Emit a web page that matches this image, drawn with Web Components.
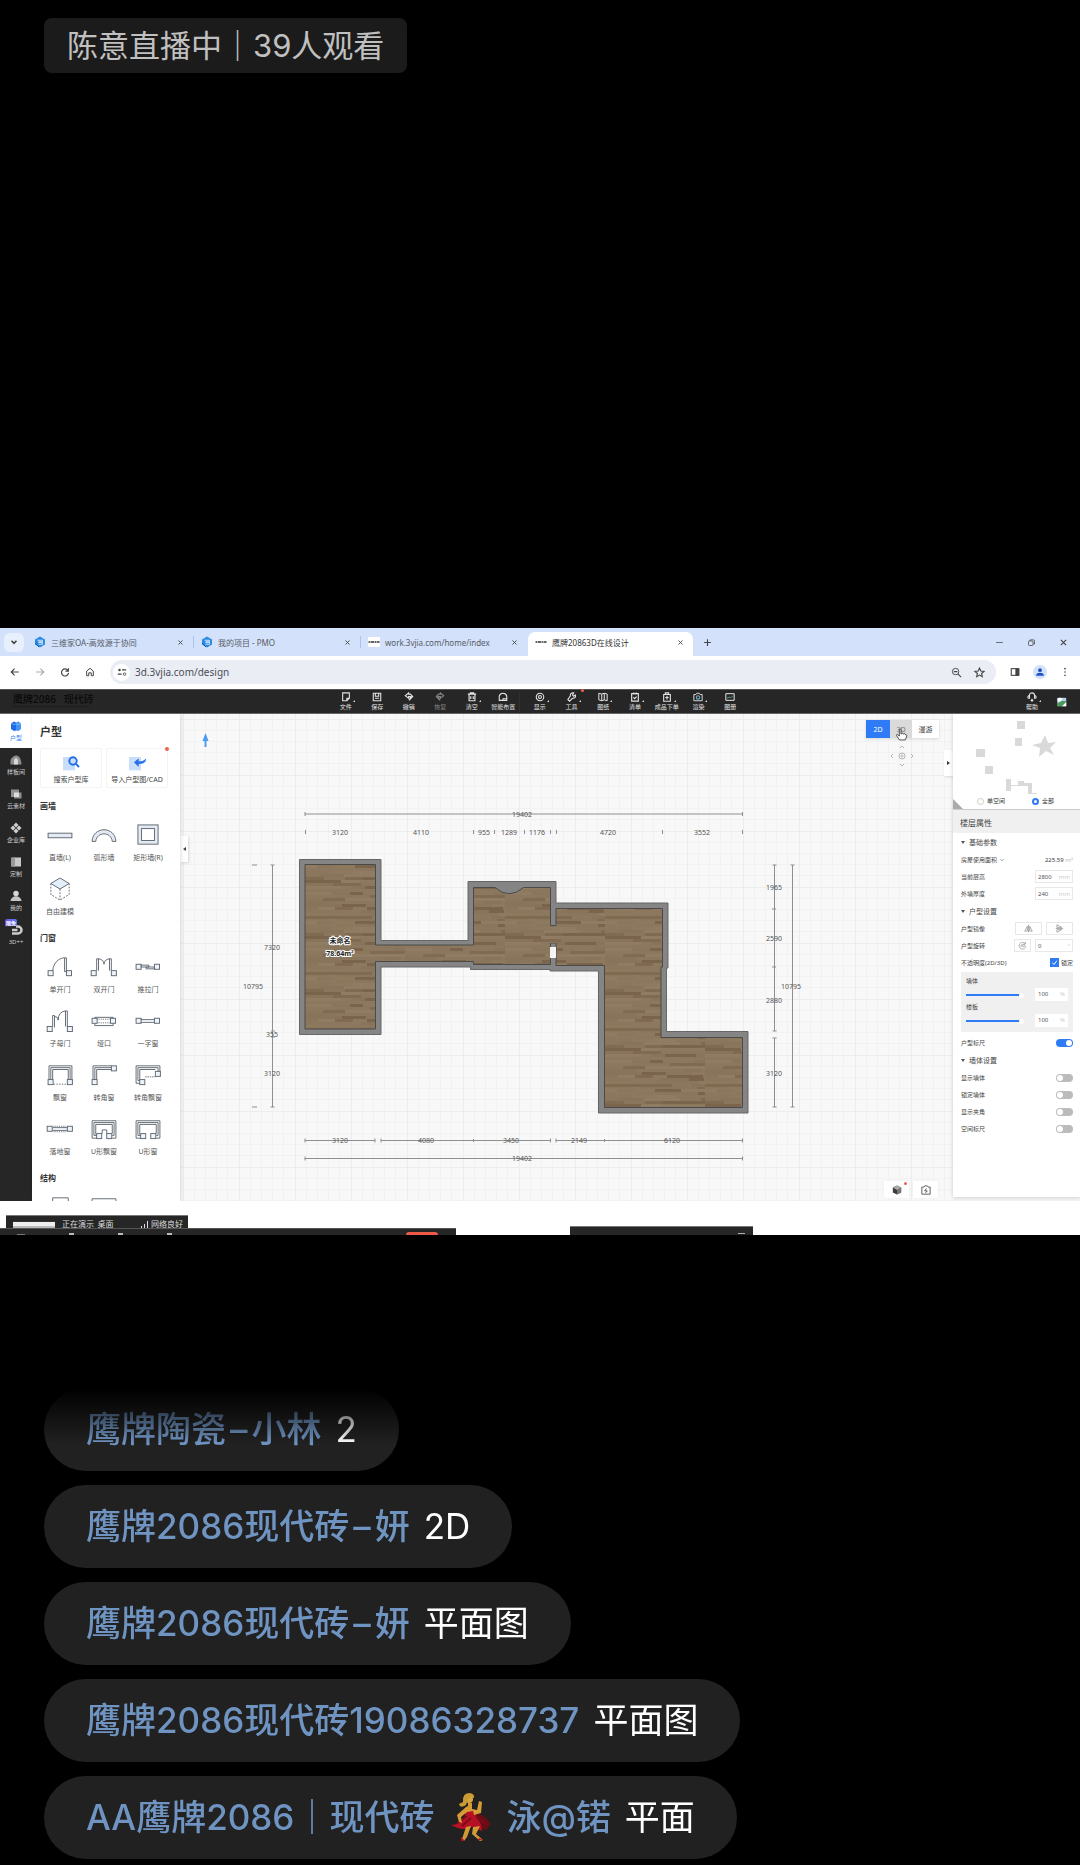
<!DOCTYPE html>
<html lang="zh-CN">
<head>
<meta charset="utf-8">
<meta name="viewport" content="width=device-width, initial-scale=1">
<title>直播间</title>
<style>
html{background:#000}
body{margin:0;background:#000;color:#333;font-family:"Noto Sans","Noto Sans CJK SC",sans-serif}
</style>
</head>
<body>
<live-room></live-room>
<script>
const element = (tag, html, setup) => customElements.define(tag, class extends HTMLElement {
  connectedCallback() {
    if (this.shadowRoot) return;
    const root = this.attachShadow({mode: 'open'});
    const t = document.createElement('template');
    t.innerHTML = '<style>*{box-sizing:border-box}button{font:inherit;color:inherit;border:0;background:none;padding:0;margin:0}</style>' +
      (typeof html === 'function' ? html(this) : html);
    root.append(t.content.cloneNode(true));
    if (setup) setup(this, root);
  }
});

/* ---------- icons (24 x 24 unless listed in BOX) ---------- */
const BOX = {wall:'0 0 28 24', dancer:'0 0 42 48'};
const sq = (x, y) => `<rect x="${x}" y="${y}" width="5.5" height="5.5" fill="#eef4fb"/>`;
const ICONS = {
  down:'<path d="M6 9l6 6 6-6" stroke-width="4"/>',
  close:'<path d="M5 5l14 14M19 5L5 19" stroke-width="3"/>',
  plus:'<path d="M12 3v18M3 12h18" stroke-width="3"/>',
  min:'<path d="M3 12h18"/>',
  restore:'<rect x="4" y="8" width="12" height="12" rx="2"/><path d="M8 8V5h10q2 0 2 2v9h-4"/>',
  back:'<path d="M21 12H4M11 4l-8 8 8 8" stroke-width="2.8"/>',
  forward:'<path d="M3 12h17M13 4l8 8-8 8" stroke-width="2.6"/>',
  reload:'<path d="M19.5 9A8.5 8.5 0 1 0 20.500 14M20 3v7h-7" stroke-width="2.8"/>',
  home:'<path d="M4 21V10l8-7 8 7v11h-5v-7H9v7z" stroke-width="2.4"/>',
  tune:'<path d="M12 7h10M2 17h9" stroke-width="3"/><circle cx="6" cy="7" r="3" fill="currentColor" stroke="none"/><circle cx="18" cy="17" r="3"/>',
  lens:'<circle cx="10" cy="10" r="7"/><path d="M15 15l7 7M6 10h8" stroke-width="2.4"/>',
  star:'<path d="M12 2.500l2.900 6.400 7 .7-5.300 4.600 1.600 6.900L12 17.500l-6.200 3.600 1.600-6.900L2.100 9.600l7-.7z" stroke-width="2.4"/>',
  side:'<rect x="3" y="4" width="18" height="16" stroke-width="2.6"/><path d="M14 4h7v16h-7z" fill="currentColor"/>',
  user:'<circle cx="12" cy="7.500" r="4.500" fill="#1a53c4" stroke="none"/><path d="M3 21v-2c0-7 18-7 18 0v2z" fill="#1a53c4" stroke="none"/>',
  dots:'<g fill="currentColor" stroke="none"><circle cx="12" cy="4" r="2"/><circle cx="12" cy="12" r="2"/><circle cx="12" cy="20" r="2"/></g>',
  fav:'<path d="M12 1l10 6v10l-10 6-10-6V7z" fill="#2c8ae0" stroke="none"/><path d="M7 8.500h10v3H9.500v1.500H17v3.500H9" stroke="#d8ebff" stroke-width="1.800"/><path d="M2 14l8 8" stroke="#0a5eb5"/>',
  mark:'<rect x="0" y="2" width="24" height="20" fill="#fff" stroke="none"/><path d="M1 12h22" stroke="#666" stroke-width="4" stroke-dasharray="4 1 6 1"/>',
  file:'<path d="M4 2h16v13l-6 6H4zM20 15h-6v6" stroke-width="2.6"/>',
  save:'<path d="M3 3h18v18H3zM8 3v7h8V3M7 15h10" stroke-width="2.6"/>',
  undo:'<path d="M11 2L3 9l8 6V11h6l-5 9 9-9-6-6h-4z" stroke-width="2.600"/>',
  redo:'<path d="M13 2l8 7-8 6V11H7l5 9-9-9 6-6h4z" stroke-width="2.600"/>',
  trash:'<path d="M2 5h20M8 5V2h8v3M5 6v15h14V6M9 10v7M15 10v7" stroke-width="2.800"/>',
  house:'<path d="M3 20V10q2-7 9-7t9 7v10zM12 20v-4h9" stroke-width="2.600"/>',
  eye:'<circle cx="12" cy="12" r="9" stroke-width="2.600"/><circle cx="12" cy="12" r="3.500" stroke-width="2.600"/>',
  tool:'<path d="M20 7l-4 3-3-3 3-5c-6-1-9 3-8 8l-6 8 4 4 7-7c6 1 9-4 7-8z" stroke-width="2.600"/>',
  map:'<path d="M2 3l7 2 6-2 7 2v16l-7-2-6 2-7-2zM9 5v16M15 3v16" stroke-width="2.400"/>',
  list:'<path d="M4 4h16v18H4zM9 1v5M15 1v5M8 13l3 3 5-5" stroke-width="2.800"/>',
  bag:'<path d="M4 6h16v16H4zM8 6V2h8v4M12 9v9M8 13h8" stroke-width="2.600"/>',
  camera:'<path d="M2 6h5l2-3h6l2 3h5v15H2z" stroke-width="2.200"/><circle cx="12" cy="13" r="4" stroke="#5db6cc" stroke-width="2.600"/><path d="M9 11l2-2" stroke="#e6503c" stroke-width="3"/>',
  album:'<path d="M2 4h20v16H2z" stroke-width="2.400"/><path d="M5 15l5-3 4 2 5-5" stroke="#63b58e" stroke-width="2"/>',
  headset:'<path d="M6 8c0-8 12-8 12 0M6 8v7H3q-3-4 3-7zM18 8v7h3q3-4-3-7zM12 22v-6M9 19l3 3 3-3" stroke-width="2.600"/>',
  photo:'<rect x="1" y="2" width="21" height="20" fill="#b8d4ef" stroke="none"/><path d="M1 16q8-9 21-6v12H1z" fill="#4b9955" stroke="none"/><path d="M1 4q7-4 12 0l-5 7H1z" fill="#fff" stroke="none"/><path d="M12 22L22 12v10z" fill="#fff" stroke="none"/>',
  plan:'<path d="M2 7l6-4 4 2v16l-4 1-6-4z" fill="#1d6be8" stroke="none"/><path d="M12 5l5-2 5 4v11l-5 4-5-1z" fill="#4593f7" stroke="none"/><path d="M2 7l6 2 4-1 5 1 5-2" stroke="#b9d8ff" stroke-width="1"/>',
  arch:'<path d="M1 21v-9q5-10 13-9 8 3 9 18z" fill="#8e8e8e" stroke="none"/><path d="M8 21V11q4-6 8 0v10z" fill="#d8d8d8" stroke="none"/>',
  sofa:'<path d="M2 3h16v6h5v12H8v-3H2z" fill="#909090" stroke="none"/><path d="M8 9h10v9H8z" fill="#ddd" stroke="none"/>',
  lib:'<path d="M12 1l5 5-5 5-5-5zM18 7l5 5-5 5-5-5zM12 13l5 5-5 5-5-5zM6 7l5 5-5 5-5-5z" fill="#cfcfcf" stroke="none"/>',
  closet:'<path d="M2 3l8-1v20l-8-1z" fill="#999" stroke="none"/><path d="M10 3h12v18H10z" fill="#c8c8c8" stroke="none"/>',
  me:'<circle cx="12" cy="7" r="5.500" fill="#d6d6d6" stroke="none"/><path d="M1 22c1-13 21-13 22 0z" fill="#c4c4c4" stroke="none"/>',
  ring:'<path d="M4 12h11M12 5h4a7 7 0 0 1 0 14H4" stroke="#ccc" stroke-width="5"/>',
  search:'<path d="M0 3h18v20H0z" fill="#c9def8" stroke="none"/><circle cx="15" cy="9" r="5.500" stroke="#2470e8" stroke-width="3"/><path d="M19 13l5 5" stroke="#2470e8" stroke-width="3"/>',
  import:'<path d="M0 3h18v20H0z" fill="#c9def8" stroke="none"/><path d="M25 6c0 6-5 7-11 7v4l-6-6 6-5v4c5 0 8 0 11-4z" fill="#2470e8" stroke="#2470e8" stroke-width="1"/>',
  rotate:'<path d="M19 7A9 9 0 1 0 21 13M20 2v6h-6" stroke-width="1.600"/><path d="M6 15l4-6v7M13 9h4v6h-4z" stroke-width="1.400"/>',
  fliph:'<path d="M12 2v20M9 6v13H2zM15 6v13h7z" stroke-width="1.800"/>',
  flipv:'<path d="M2 12h20M5 9h13L5 2zM5 15h13L5 22z" stroke-width="1.800"/>',
  cube:'<path d="M12 1l10 5v12l-10 5-10-5V6z" fill="#3c3c3c" stroke="none"/><path d="M12 12l10-6v12l-10 5z" fill="#777" stroke="none"/><path d="M2 6l10-5 10 5-10 6z" fill="#aaa" stroke="none"/>',
  shot:'<path d="M2 5h5l2-3h6l2 3h5v17H2zM13 8l-4 6h6l-4 5" stroke-width="2.200"/>',
  hand:'<path d="M8 22l-5-8c-1-2 1-3 3-1l2 2V3c0-2 3-2 3 0v8h1c0-2 3-2 3 0h1c0-1 3-1 3 1 3 0 3 2 2 5l-2 5z" fill="#fff" stroke="#222" stroke-width="1.400"/>',
  /* wall and opening symbols */
  w1:'<rect x="1" y="10" width="26" height="5" fill="#e3eaf4"/>',
  w2:'<path d="M1 19C2 2 26 2 27 19h-4C22 8 6 8 5 19z" fill="#e3eaf4"/>',
  w3:'<rect x="3" y="1" width="22" height="21" fill="#e3eaf4"/><rect x="7" y="5" width="14" height="13" fill="#fff"/>',
  w4:'<path d="M14 0l10 6-10 6L4 6z" fill="#e3f0fb"/><path d="M4 6v12l10 6 10-6V6M14 12v12" stroke-dasharray="2 1.500"/>',
  d1:sq(1,16)+sq(21,16)+'<path d="M6 16C7 7 13 2 19 2v15h2V2h-2"/>',
  d2:sq(0,16)+sq(22,16)+'<path d="M6 16V3h2v13M20 16V3h2v13M8 3q6 1 6 6 0-5 6-6"/>',
  d3:sq(1,9)+sq(21,9)+'<path d="M6 10h9v2H6M12 12h9v2h-9z"/>',
  d4:sq(0,18)+sq(22,18)+'<path d="M6 18V6h2v13M20 18V1h2v17M8 7q4 0 4 4 0-9 8-10"/>',
  d5:sq(1,9)+sq(21,9)+'<path d="M4 9V8h20v1M4 15v2h20v-2"/><path d="M7 10h14M7 14h14" stroke-dasharray="1 1"/>',
  d6:sq(1,9)+sq(21,9)+'<path d="M6 10.500h15M6 13.500h15"/>',
  d7:sq(1,17)+sq(22,17)+'<path d="M2 17V2h25v15M4 17V4h21v13M6 17V6h17v11"/><path d="M7 22h15" stroke-dasharray="1.500 1.500"/>',
  d8:sq(1,17)+sq(22,2)+'<path d="M2 17V2h20M4 17V4h18M6 17V6h16"/>',
  d9:sq(5,17)+sq(22,8)+'<path d="M5 21H1V2h26v6M5 18H3V4h22v4M5 17V6h17"/><path d="M11 14h11" stroke-dasharray="1.500 1"/>',
  d10:sq(0,9)+sq(22,9)+'<path d="M6 10.500h16M6 13.500h16"/><path d="M7 9h14M7 15h14" stroke-dasharray="1 1"/>',
  d11:sq(6,17)+sq(17,17)+'<path d="M6 22H1V3h26v19h-4M6 19H3V5h22v14h-2M5 18V7h18v10M12 17v-4h5v4"/>',
  d12:sq(6,17)+sq(17,17)+'<path d="M6 22H1V3h26v19h-4M6 19H3V5h22v14h-2M5 18V7h18v10"/>',
  s1:'<path d="M6 24V2h17v22"/>', s2:'<path d="M1 24V3h26v21"/>',
  dancer:'<path d="M22 20q11-1 19 11l-5 6q-7-2-13-6z" fill="#680d15"/><path d="M15 17q6-3 9 0l3 9q5 4 5 12l-10-4q-9 5-21-2 9 0 14-8z" fill="#b41224"/><path d="M7 30l10-7M12 33l9-8M26 23l10 8" stroke="#7e0b18" fill="none"/><path d="M18 10h4v6l5 1 2-9 3 1-1 11-7 2-1-4-6 1-6 5 1 6-3-1-2-7 9-8 2-1z" fill="#d79b35"/><path d="M24 34l6-1-4 8 7 6-3 1-8-7 1-7zM16 34l5-1-4 11-3 4-2-2z" fill="#d29a37"/><circle cx="19" cy="6" r="4" fill="#d8a545"/><path d="M16 12q-6 4-7-1l4-2q-1-9 7-9 5 1 4 5-5-2-6 1z" fill="#c99b32"/><path d="M11 44l4 4h-4zM29 45l4 2h-5z" fill="#b41224"/>'
};
element('ui-icon', el => {
  const n = el.getAttribute('name');
  const box = BOX[n] || (/^[wds]\d+$/.test(n) ? BOX.wall : '0 0 24 24');
  const flat = n === 'dancer';
  return `<style>:host{display:inline-block;width:10px;height:10px;flex:none}svg{display:block;width:100%;height:100%;overflow:visible}</style>
  <svg viewBox="${box}" aria-hidden="true" fill="none" stroke="${flat ? 'none' : 'currentColor'}" stroke-width="${box === BOX.wall ? 1 : 2}">${ICONS[n]}</svg>`;
});

/* ---------- live room ---------- */
element('live-badge', `<style>
:host{display:inline-block;background:#1b1b1b;color:#c0c0c0;border-radius:8px;padding:0 23px;font:400 31px/55px Inter,"Noto Sans CJK SC",sans-serif;white-space:nowrap}
</style><slot></slot>`);

element('chat-bubble', `<style>
:host{display:flex;gap:14px;align-items:center;height:83px;padding:0 42px 2px;border-radius:42px;background:#212121;color:#fff;font:400 35px/48px Inter,"Noto Sans CJK SC",sans-serif;white-space:nowrap}
.name{color:#6f94c2;font-weight:500}
</style><span class="name"><slot name="name"></slot></span><span><slot></slot></span>`);

element('live-room', `<style>
:host{display:block;background:#000;overflow:hidden}
header{padding:18px 44px 0;height:628px}
main{display:block}
section{display:flex;flex-direction:column;align-items:flex-start;gap:14px;margin-top:153px;padding:0 44px 6px;-webkit-mask-image:linear-gradient(transparent,#000 56px);mask-image:linear-gradient(transparent,#000 56px)}
.name{display:flex;align-items:center}
.dash{padding:0 4px}
.dance{width:42px;height:48px;margin:0 14px 0 16px}
</style>
<header><live-badge>陈意直播中｜39人观看</live-badge></header>
<main><shared-screen></shared-screen></main>
<section aria-label="评论">
<chat-bubble><span slot="name">鹰牌陶瓷<span class="dash">–</span>小林</span>2</chat-bubble>
<chat-bubble><span slot="name">鹰牌2086现代砖<span class="dash">–</span>妍</span>2D</chat-bubble>
<chat-bubble><span slot="name">鹰牌2086现代砖<span class="dash">–</span>妍</span>平面图</chat-bubble>
<chat-bubble><span slot="name">鹰牌2086现代砖19086328737</span>平面图</chat-bubble>
<chat-bubble><span slot="name" class="name">AA鹰牌2086｜现代砖<ui-icon class="dance" name="dancer"></ui-icon>泳@锘</span>平面</chat-bubble>
</section>`);

element('shared-screen', `<style>:host{display:block;background:#fff}</style>
<tab-strip></tab-strip><address-bar></address-bar><app-bar></app-bar><design-workspace></design-workspace><screen-foot></screen-foot>`);

/* ---------- browser ---------- */
element('browser-tab', el => `<style>
:host{display:flex;align-items:center;gap:5px;width:167px;height:12px;padding:0 9px 0 7px;font-size:8px;color:#555b66;border-right:1px solid #a9c4f0;white-space:nowrap}
:host([active]){width:165px;height:24px;margin-top:4px;padding-bottom:4px;background:#fff;border-radius:7px 7px 0 0;border:0;color:#333}
:host([plain]){border-color:transparent}
ui-icon{width:12px;height:12px}
span{flex:1}
button{display:flex}button ui-icon{width:7px;height:7px;color:#444}
</style><ui-icon name="${el.getAttribute('icon')}"></ui-icon><span><slot></slot></span><button aria-label="关闭"><ui-icon name="close"></ui-icon></button>`);

element('tab-strip', `<style>
:host{display:flex;align-items:center;height:28px;background:#d3e1fa;color:#444}
.menu{display:flex;align-items:center;justify-content:center;width:20px;height:19px;margin:0 3px 0 4px;border-radius:6px;background:#e8f0fd}
.menu ui-icon{width:10px;height:10px}
.add{margin-left:10px;display:flex}.add ui-icon{width:9px;height:9px}
.win{margin-left:auto;display:flex;gap:23px;padding-right:12px}.win button{display:flex}.win ui-icon{width:9px;height:9px}
</style><button class="menu" aria-label="标签页"><ui-icon name="down"></ui-icon></button>
<browser-tab icon="fav">三维家OA-高效源于协同</browser-tab><browser-tab icon="fav">我的项目 - PMO</browser-tab><browser-tab icon="mark" plain>work.3vjia.com/home/index</browser-tab><browser-tab icon="mark" active>鹰牌20863D在线设计</browser-tab>
<button class="add" aria-label="新标签页"><ui-icon name="plus"></ui-icon></button>
<div class="win"><button aria-label="最小化"><ui-icon name="min"></ui-icon></button><button aria-label="还原"><ui-icon name="restore"></ui-icon></button><button aria-label="关闭窗口"><ui-icon name="close"></ui-icon></button></div>`);

element('address-bar', `<style>
:host{display:flex;align-items:center;height:33px;background:#fff;padding:0 10px 1px;color:#444}
button{display:flex}ui-icon{width:10px;height:10px}
.nav{display:flex;gap:15px;width:100px}
.off{color:#aaa}
label{flex:1;display:flex;align-items:center;height:24px;border-radius:12px;background:#eaedf4;padding:0 11px 0 3px}
.tune{width:17px;height:17px;border-radius:9px;background:#fff;display:flex;align-items:center;justify-content:center;margin-right:5px}
input{flex:1;min-width:0;border:0;background:none;padding:0;font:10px/16px "Noto Sans",sans-serif;color:#4b4f58;outline:0}
.in{display:flex;gap:12px}.in ui-icon{width:11px;height:11px}
.out{display:flex;align-items:center;gap:13px;padding-left:14px}
.who{width:14px;height:14px;border-radius:7px;background:#d3e1fa;align-items:center;justify-content:center}
</style><div class="nav"><button aria-label="后退"><ui-icon name="back"></ui-icon></button><button class="off" aria-label="前进"><ui-icon name="forward"></ui-icon></button><button aria-label="刷新"><ui-icon name="reload"></ui-icon></button><button aria-label="主页"><ui-icon name="home"></ui-icon></button></div>
<label><span class="tune"><ui-icon name="tune"></ui-icon></span><input aria-label="地址" value="3d.3vjia.com/design"><span class="in"><ui-icon name="lens"></ui-icon><ui-icon name="star"></ui-icon></span></label>
<div class="out"><button aria-label="侧栏"><ui-icon name="side"></ui-icon></button><button class="who" aria-label="账号"><ui-icon name="user"></ui-icon></button><button aria-label="更多"><ui-icon name="dots"></ui-icon></button></div>`);

/* ---------- design tool ---------- */
element('menu-item', el => `<style>
:host{display:block}
button{position:relative;display:flex;flex-direction:column;align-items:center;width:100%;font-size:6px;line-height:9px;color:#e4e4e4;white-space:nowrap}
:host([off]) button{color:#858585}
ui-icon{width:10px;height:10px;margin-bottom:1px}
:host([more]) button::after{content:"";position:absolute;left:calc(50% + 7px);top:8px;border:1px solid;border-color:transparent #ddd #ddd transparent}
:host([fresh]) button::before{content:"";position:absolute;left:calc(50% + 9px);top:-3px;width:3px;height:3px;border-radius:2px;background:#f0604d}
</style><button><ui-icon name="${el.getAttribute('icon')}"></ui-icon><slot></slot></button>`);

element('app-bar', `<style>
:host{display:grid;grid-template-columns:1fr auto 1fr;align-items:center;height:25px;background:#262626;border-top:1px solid #555;border-bottom:1px solid #666}
.logo{padding-left:13px;color:#0a0a0a;font:500 10px/10px "Noto Sans","Noto Sans CJK SC",sans-serif}
.logo small{display:block;height:4px;width:76px;margin-top:2px;border-top:1px dotted #161616}
nav{display:flex;gap:4px;padding-right:4px}
.g{display:grid;grid-auto-flow:column;grid-auto-columns:1fr}
.a{width:190px;border-right:1px solid #303030}.b{width:222px}
.right{display:flex;justify-content:flex-end;align-items:center;gap:9px;padding-right:13px}
.right menu-item{width:32px}
.right>ui-icon{width:10px;height:10px}
</style><div class="logo">鹰牌2086&nbsp;&nbsp; 现代砖<small></small></div>
<nav><div class="g a"><menu-item icon="file" more>文件</menu-item><menu-item icon="save">保存</menu-item><menu-item icon="undo">撤销</menu-item><menu-item icon="redo" off>恢复</menu-item><menu-item icon="trash" more>清空</menu-item><menu-item icon="house">智能布置</menu-item></div>
<div class="g b"><menu-item icon="eye" more>显示</menu-item><menu-item icon="tool" more fresh>工具</menu-item><menu-item icon="map" more>图纸</menu-item><menu-item icon="list" more>清单</menu-item><menu-item icon="bag" more>成品下单</menu-item><menu-item icon="camera" more>渲染</menu-item><menu-item icon="album">图册</menu-item></div></nav>
<div class="right"><menu-item icon="headset" more>帮助</menu-item><ui-icon name="photo"></ui-icon></div>`);

element('rail-item', el => `<style>
:host{display:block;height:34px;color:#d0d0d0}
:host([active]){background:#fff;color:#3c84f5}
button{position:relative;display:flex;flex-direction:column;align-items:center;width:100%;padding-top:6px;font-size:6px;line-height:10px}
ui-icon{width:12px;height:12px;margin-bottom:1px}
em{position:absolute;left:5px;top:1px;background:linear-gradient(90deg,#7a4be0,#567cf0);color:#fff;font:700 5px/7px "Noto Sans CJK SC",sans-serif;padding:0 1px;border-radius:2px 2px 2px 0}
</style><button><ui-icon name="${el.getAttribute('icon')}"></ui-icon>${el.hasAttribute('badge') ? `<em>${el.getAttribute('badge')}</em>` : ''}<slot></slot></button>`);

element('part-item', el => `<style>
:host{display:block}
button{display:flex;flex-direction:column;align-items:center;width:100%;font-size:7px;line-height:10px;color:#555;white-space:nowrap}
ui-icon{width:28px;height:22px;margin:1px 0 7px;color:#5b626b}
</style><button><ui-icon name="${el.getAttribute('icon')}"></ui-icon><slot></slot></button>`);

element('part-group', el => `<style>
:host{display:block}
h3{margin:0;font:700 8px/12px "Noto Sans CJK SC",sans-serif;color:#333;padding-left:8px}
div{display:grid;grid-template-columns:repeat(3,1fr);row-gap:14px;padding:11px 10px 15px 6px}
</style><h3>${el.getAttribute('label')}</h3><div><slot></slot></div>`);

element('parts-panel', `<style>
:host{display:block;width:148px;background:#fff;overflow:hidden;box-shadow:1px 0 4px #0002;z-index:1}
h2{margin:0;padding:9px 8px 0;font:700 11px/16px "Noto Sans CJK SC",sans-serif;color:#333}
.cards{display:grid;grid-template-columns:1fr 1fr;gap:4px;padding:9px 12px 12px 8px}
.cards button{position:relative;height:40px;border:1px solid #f3f3f3;border-radius:2px;display:flex;flex-direction:column;align-items:center;gap:4px;padding-top:6px;font-size:7px;line-height:10px;white-space:nowrap;color:#444}
.cards ui-icon{width:16px;height:16px}
.dot{position:absolute;right:-2px;top:-2px;width:4px;height:4px;border-radius:2px;background:#f0604d}
</style><h2>户型</h2><div class="cards"><button><ui-icon name="search"></ui-icon>搜索户型库</button><button><ui-icon name="import"></ui-icon>导入户型图/CAD<i class="dot"></i></button></div>
<part-group label="画墙"><part-item icon="w1">直墙(L)</part-item><part-item icon="w2">弧形墙</part-item><part-item icon="w3">矩形墙(R)</part-item><part-item icon="w4">自由建模</part-item></part-group>
<part-group label="门窗"><part-item icon="d1">单开门</part-item><part-item icon="d2">双开门</part-item><part-item icon="d3">推拉门</part-item><part-item icon="d4">子母门</part-item><part-item icon="d5">垭口</part-item><part-item icon="d6">一字窗</part-item><part-item icon="d7">飘窗</part-item><part-item icon="d8">转角窗</part-item><part-item icon="d9">转角飘窗</part-item><part-item icon="d10">落地窗</part-item><part-item icon="d11">U形飘窗</part-item><part-item icon="d12">U形窗</part-item></part-group>
<part-group label="结构"><part-item icon="s1"></part-item><part-item icon="s2"></part-item></part-group>`);

/* wooden floor: short planks in rows, shades from a small fixed generator */
const planks = (() => {
  let s = 7, out = '';
  const rnd = () => (s = (s * 16807) % 2147483647) / 2147483647;
  const tones = ['#8c785f','#88745b','#907c63','#806b52','#8a765d','#7a654c','#8d795e','#8b775d'];
  for (let y = 0; y < 56; y += 3) for (let x = 0; x < 100;) {
    const w = 12 + Math.round(rnd() * 26);
    out += `<rect x="${x}" y="${y}" width="${w}" height="${rnd() > .5 ? 4 : 3}" fill="${tones[Math.floor(rnd() * 8)]}"/>`;
    x += w;
  }
  return out;
})();
const T = (x, y, t) => `<text x="${x}" y="${y + 3}">${t}</text>`;
const H = (y, a, b) => `M${a} ${y}H${b}M${a} ${y - 2}v4M${b} ${y - 2}v4`;
const V = (x, a, b) => `M${x} ${a}V${b}M${x - 2} ${a}h4M${x - 2} ${b}h4`;
element('plan-canvas', `<style>
:host{display:block;position:relative;flex:1;min-width:0;height:100%}
svg.plan{display:block;width:100%;height:100%}
text{font:7px "Noto Sans",sans-serif;fill:#555;text-anchor:middle}
.room text{font:700 7px "Noto Sans","Noto Sans CJK SC",sans-serif;fill:#222;stroke:#fff;stroke-width:2px;paint-order:stroke}
.fold{position:absolute;left:0;top:122px;width:8px;height:26px;background:#fff;box-shadow:1px 1px 3px #0002;color:#333;display:flex;align-items:center;justify-content:center}
.fold::before{content:"";border:2px solid transparent;border-right:3px solid #444;border-left:0}
.fold.r{left:auto;right:0;top:36px;width:9px}
.fold.r::before{border:2px solid transparent;border-left:3px solid #333;border-right:0}
.modes{position:absolute;right:14px;top:6px;display:flex;height:18px;background:#fff;box-shadow:0 1px 3px #0002;font-size:7px;color:#333}
.modes button{width:24px}.modes .on{background:#2f7bf5;color:#fff}.modes .hov{background:#dadada;color:#777;width:22px}.modes button:last-child{width:27px}
.hand{position:absolute;right:45px;top:14px;width:13px;height:13px}
.tools{position:absolute;right:15px;bottom:3px;display:flex;gap:4px}
.tools button{position:relative;display:flex;align-items:center;justify-content:center;width:25px;height:17px;background:#fff;box-shadow:0 0 2px #0001;color:#555}
.tools ui-icon{width:10px;height:10px}
.tools i{position:absolute;right:2px;top:1px;width:3px;height:3px;border-radius:2px;background:#f0604d}
.pad{position:absolute;right:38px;top:31px;width:26px;height:22px}
</style>
<svg class="plan" viewBox="180 714 773 487" preserveAspectRatio="xMidYMid slice" role="img" aria-label="户型平面图">
<defs><pattern id="grid" x="183" y="719" width="56" height="56" patternUnits="userSpaceOnUse"><path d="M11.500 0v56M22.500 0v56M33.500 0v56M44.500 0v56M0 11.500h56M0 22.500h56M0 33.500h56M0 44.500h56" stroke="#f2f2f2"/><path d="M.5 0v56M0 .5h56" stroke="#ededed"/></pattern>
<pattern id="wood" x="305" y="865" width="100" height="56" patternUnits="userSpaceOnUse"><rect width="100" height="56" fill="#88745b"/>${planks}</pattern></defs>
<rect x="180" y="714" width="773" height="487" fill="#f8f8f8"/><rect x="180" y="714" width="773" height="487" fill="url(#grid)"/>
<path d="M299.500 859.500H381V940.500H468V881.500H556V903H668V968H666.500V1031.500H748V1113H598.500V971H550V969.500H470.500V967H381V1034.500H299.500z" fill="#858585" stroke="#666"/>
<path d="M305 864.500H375.500V945H473.500V887.500H495Q509 900 523.500 887.500H550.500V925.500H556V908.500H662.500V967H661V1037.500H742.500V1107.500H604.500V965.500H556V943H550.500V964.500H473.500V961.500H375.500V1029H305z" fill="url(#wood)" stroke="#4a4a48"/>
<path d="M550 926h6v17h-6z" fill="url(#wood)"/><path d="M550 947h6v11h-6z" fill="#f4f4f4"/>
<path d="${H(814, 305, 742.5)}${V(272.5, 865, 1107)}${V(774.5, 865, 1031)}${V(774.5, 1038, 1107)}${V(792.5, 865, 1107)}${H(1140.5, 305, 375)}${H(1140.5, 381, 550.5)}${H(1140.5, 556, 742.5)}${H(1158.5, 305, 742.5)}M252 865h5M252 1107h5M271 1031h4M271 1037h4M772 909h4M772 967h4M473.500 1139v3M604.500 1139v3M305.500 830v4M473.500 830v4M494.500 830v4M524.500 830v4M550.500 830v4M556.500 830v4M662.500 830v4M742.500 830v4" fill="none" stroke="#8f8f8f"/>
${T(522,814,19402)}${T(340,832,3120)}${T(421,832,4110)}${T(484,832,955)}${T(509,832,1289)}${T(537,832,1176)}${T(608,832,4720)}${T(702,832,3552)}
${T(272,947,7320)}${T(272,1034,355)}${T(272,1073,3120)}${T(253,986,10795)}
${T(774,887,1965)}${T(774,938,2590)}${T(774,1000,2880)}${T(774,1073,3120)}${T(791,986,10795)}
${T(340,1140,3120)}${T(426,1140,4080)}${T(511,1140,3450)}${T(579,1140,2149)}${T(672,1140,6120)}${T(522,1158,19402)}
<g class="room">${T(340,940,'未命名')}${T(340,953,'78.64m²')}</g>
<path d="M205.500 733l3 8h-2v6h-2v-6h-2z" fill="#4b9cf0"/>
</svg>
<button class="fold" aria-label="收起左栏"></button>
<div class="modes"><button class="on">2D</button><button class="hov">3D</button><button>漫游</button></div><ui-icon class="hand" name="hand"></ui-icon>
<svg class="pad" viewBox="0 0 26 22" fill="none" stroke="#b5b5b5" aria-hidden="true"><circle cx="13" cy="11" r="3"/><circle cx="13" cy="11" r="1"/><path d="M11 3l2-2 2 2M11 19l2 2 2-2M4 9l-2 2 2 2M22 9l2 2-2 2"/></svg>
<button class="fold r" aria-label="收起右栏"></button>
<div class="tools"><button aria-label="模型"><ui-icon name="cube"></ui-icon><i></i></button><button aria-label="截图"><ui-icon name="shot"></ui-icon></button></div>`);

/* ---------- inspector ---------- */
element('mini-map', `<style>
:host{display:block;position:relative;height:96px;background:#fff;border-bottom:1px solid #ccc}
svg{display:block;width:100%;height:80px}
.opts{display:flex;justify-content:space-between;padding:1px 26px 0 24px;font-size:6px;line-height:12px;color:#333}
label{display:flex;align-items:center;gap:3px}
input{appearance:none;width:7px;height:7px;margin:0;border:1px solid #ccc;border-radius:50%}
input:checked{border:2px solid #2f7bf5}
.corner{position:absolute;left:0;bottom:0;border:5px solid #aaa;border-top-color:transparent;border-right-color:transparent}
</style><svg viewBox="953 714 127 80" fill="#d9d9d9" aria-hidden="true"><path d="M1017 721h8v8h-8zM1015 738h7v8h-7zM976 749h9v8h-9zM985 766h8v8h-8zM1006 779h5v12h-5zM1011 785h8v1h-8zM1018 781h6v2h8v10h5v5h-9v-12h-10z"/><path d="M1045 735l3 8 8-1-6 6 4 7-8-4-7 6 1-9-8-3 9-2z"/></svg>
<div class="opts"><label><input type="radio" name="scope">单空间</label><label><input type="radio" name="scope" checked>全部</label></div><i class="corner"></i>`);

element('prop-row', el => `<style>
:host{display:flex;align-items:center;gap:2px;height:17px;font-size:6px;color:#444;white-space:nowrap}
.c{margin-left:auto;display:flex;align-items:center;gap:4px}
ui-icon{width:6px;height:6px;color:#999}
</style><span>${el.getAttribute('label')}</span>${el.hasAttribute('menu') ? '<ui-icon name="down"></ui-icon>' : ''}<span class="c"><slot></slot></span>`);

element('section-title', `<style>
:host{display:flex;align-items:center;gap:4px;height:18px;font-size:7px;color:#444}
i{border:2px solid transparent;border-top:3px solid #555;border-bottom:0}
</style><i></i><slot></slot>`);

element('unit-input', el => `<style>
:host{display:block}
label{display:flex;align-items:center;width:38px;height:13px;border:1px solid #e8e8e8;background:#fff;padding:0 2px;color:#ccc;font-size:6px}
:host([small]) label{width:33px;border-color:#fff}
input{width:100%;min-width:0;border:0;padding:0;font:6px/10px "Noto Sans",sans-serif;color:#555;background:none;outline:0}
</style><label><input aria-label="${el.getAttribute('label')}" value="${el.getAttribute('value')}"><span>${el.getAttribute('unit')}</span></label>`);

element('toggle-switch', el => `<style>
:host{display:block}
input{appearance:none;display:block;position:relative;margin:0;width:17px;height:8px;border-radius:4px;background:#bbb}
input::after{content:"";position:absolute;left:1px;top:1px;width:6px;height:6px;border-radius:3px;background:#fff}
input:checked{background:#2f7bf5}input:checked::after{left:10px}
</style><input type="checkbox" role="switch" aria-label="${el.getAttribute('label')}" ${el.hasAttribute('checked') ? 'checked' : ''}>`);

element('opacity-slider', el => `<style>
:host{display:block;height:26px;font-size:6px;line-height:8px;color:#444}
label{display:block}
div{display:flex;align-items:center;justify-content:space-between;height:18px}
input{appearance:none;width:58px;height:7px;margin:2px 0 0;background:linear-gradient(90deg,#2f7bf5 54px,#ddd 54px) center/100% 2px no-repeat}
input::-webkit-slider-thumb{appearance:none;width:5px;height:5px;border-radius:3px;background:#fff}
</style><label for="r">${el.getAttribute('label')}</label><div><input id="r" type="range" value="100"><unit-input small label="${el.getAttribute('label')}" value="100" unit="%"></unit-input></div>`);

element('props-panel', `<style>
:host{display:flex;flex-direction:column;width:127px;height:483px;background:#fff;box-shadow:0 0 4px #0003;z-index:1}
h2{margin:0;height:23px;padding-left:7px;background:#f0f0f0;font:400 8px/25px "Noto Sans CJK SC",sans-serif;color:#444}
.body{padding:0 7px 0 8px}
.btn{display:flex;align-items:center;justify-content:center;width:27px;height:13px;border:1px solid #e8e8e8;color:#888}
.btn.s{width:17px}.btn ui-icon{width:9px;height:9px}
.box{background:#f0f0f0;height:60px;margin:1px 0 2px;padding:5px 5px 0}
.lock{display:flex;align-items:center;gap:2px}
.lock span{position:relative;display:flex}
.lock input{appearance:none;margin:0;width:9px;height:9px;background:#2f7bf5}
.lock svg{position:absolute;left:2px;top:2px;width:5px;height:5px;pointer-events:none}
small{font-size:6px;color:#bbb}
</style><mini-map></mini-map><h2>楼层属性</h2><div class="body">
<section-title>基础参数</section-title>
<prop-row label="房屋使用面积" menu><span>225.59 <small>m²</small></span></prop-row>
<prop-row label="当前层高"><unit-input label="当前层高" value="2800" unit="mm"></unit-input></prop-row>
<prop-row label="外墙厚度"><unit-input label="外墙厚度" value="240" unit="mm"></unit-input></prop-row>
<section-title>户型设置</section-title>
<prop-row label="户型镜像"><button class="btn" aria-label="左右镜像"><ui-icon name="fliph"></ui-icon></button><button class="btn" aria-label="上下镜像"><ui-icon name="flipv"></ui-icon></button></prop-row>
<prop-row label="户型旋转"><button class="btn s" aria-label="旋转"><ui-icon name="rotate"></ui-icon></button><unit-input label="户型旋转" value="0" unit="°"></unit-input></prop-row>
<prop-row label="不透明度(2D/3D)"><label class="lock"><span><input type="checkbox" checked><svg viewBox="0 0 5 5" fill="none" stroke="#fff"><path d="M0 2.500l2 2 3-4"/></svg></span>锁定</label></prop-row>
<div class="box"><opacity-slider label="墙体"></opacity-slider><opacity-slider label="楼板"></opacity-slider></div>
<prop-row label="户型标尺"><toggle-switch label="户型标尺" checked></toggle-switch></prop-row>
<section-title>墙体设置</section-title>
<prop-row label="显示墙体"><toggle-switch label="显示墙体"></toggle-switch></prop-row>
<prop-row label="锁定墙体"><toggle-switch label="锁定墙体"></toggle-switch></prop-row>
<prop-row label="显示夹角"><toggle-switch label="显示夹角"></toggle-switch></prop-row>
<prop-row label="空间标尺"><toggle-switch label="空间标尺"></toggle-switch></prop-row>
</div>`);

element('design-workspace', `<style>
:host{display:flex;height:487px;background:#f3f3f3;overflow:hidden}
.rail{width:32px;background:#262626;flex:none}
parts-panel,props-panel{flex:none}
</style><nav class="rail"><rail-item icon="plan" active>户型</rail-item><rail-item icon="arch">样板间</rail-item><rail-item icon="sofa">云素材</rail-item><rail-item icon="lib">企业库</rail-item><rail-item icon="closet">定制</rail-item><rail-item icon="me">我的</rail-item><rail-item icon="ring" badge="限免">3D++</rail-item></nav>
<parts-panel></parts-panel><plan-canvas></plan-canvas><props-panel></props-panel>`);

/* floating meeting bars, cut off by the lower edge of the shared screen */
element('screen-foot', `<style>
:host{display:grid;grid-template-columns:456px 114px 183px;height:34px;background:#fff;overflow:hidden;align-items:end}
.share{display:flex;align-items:flex-end;width:182px;height:13px;margin-left:6px;padding:0 5px 0 7px;background:#262626;color:#ddd;font-size:8px;line-height:9px;overflow:hidden;white-space:nowrap;border-top:1px solid #777}
.thumb{width:42px;height:7px;background:linear-gradient(#333 1px,#eee 1px 5px,#bbb 5px);margin-right:7px}
.net{margin-left:auto;display:flex;gap:2px;align-items:flex-end}
.net svg{width:8px;height:8px}
.bar{height:7px;background:#262626;border-top:1px solid #555;display:flex;align-items:flex-end;gap:44px;padding-left:17px;overflow:hidden}
.bar i{flex:none;width:8px;height:1px;background:#777}.bar i+i{width:5px;height:2px;background:#bbb}
.bar b{flex:none;width:32px;height:3px;border-radius:8px 8px 0 0;background:#ee5a48;margin-left:190px}
.mini{grid-column:3;height:9px;background:#262626;border-top:1px solid #777;display:flex;justify-content:flex-end;padding:6px 8px 0}
.mini i{width:7px;height:1px;background:#aaa}
</style><div><div class="share"><span class="thumb"></span><span>正在演示_桌面</span><span class="net"><svg viewBox="0 0 8 8" fill="#ddd" aria-hidden="true"><path d="M0 6h1v2H0zM3 4h1v4H3zM6 1h1v7H6z"/></svg>网络良好</span></div><div class="bar"><i></i><i></i><i></i><i></i><b></b></div></div><div class="mini"><i></i></div>`);
</script>
</body>
</html>
